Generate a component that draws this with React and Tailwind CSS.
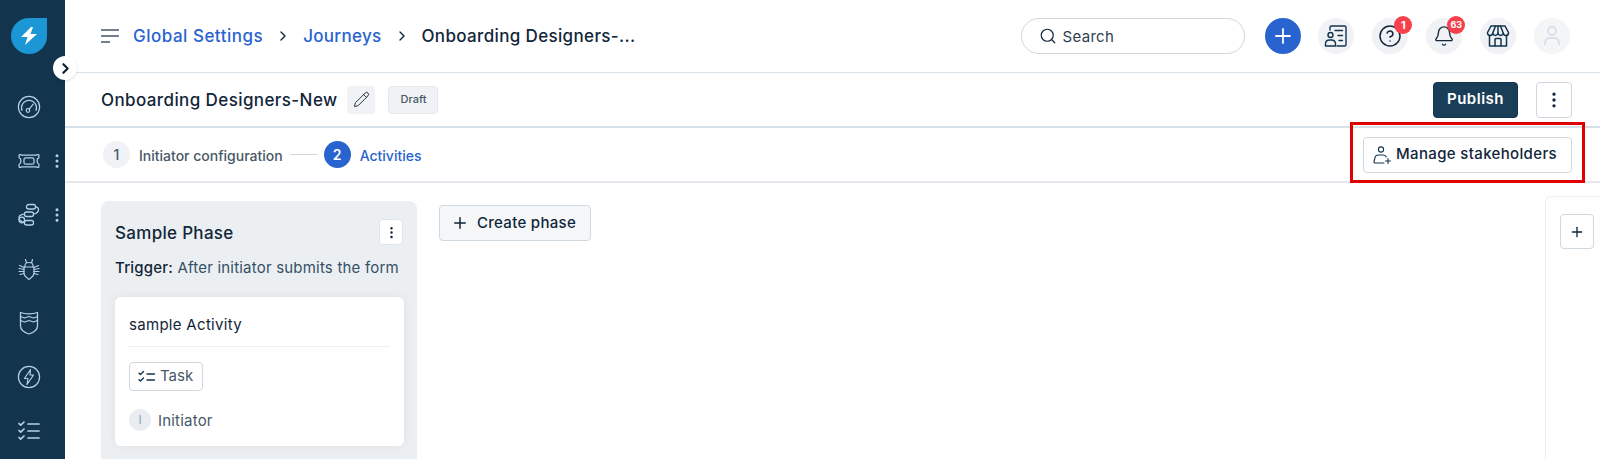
import React from 'react';
import { ChevronRight, EllipsisVertical, Plus, Search, Pencil, Bell, CircleHelp } from 'lucide-react';

function GaugeIcon() {
  return (
    <svg width="24" height="24" viewBox="0 0 24 24" fill="none" stroke="#b5cfe6" strokeWidth="1.2" strokeLinecap="round">
      <circle cx="12" cy="12" r="10.6" />
      <path d="M5 15.5a7.5 7.5 0 1 1 14 0" />
      <circle cx="11" cy="15.5" r="1.8" />
      <path d="M12.2 14.2l4-5" />
    </svg>
  );
}

function TicketIcon() {
  return (
    <svg width="22" height="24" viewBox="0 0 24 24" fill="none" stroke="#b5cfe6" strokeWidth="1.4" strokeLinejoin="round">
      <path d="M2.500 5c.8 0 1.200.6 2 .6h15c.8 0 1.200-.6 2-.6h.5c.5 0 .8.3.8.8v2.600c-1.200.5-2 2-2 3.600s.8 3.100 2 3.600v2.600c0 .5-.3.800-.8.800h-.5c-.8 0-1.200-.6-2-.6h-15c-.8 0-1.200.6-2 .6H2c-.5 0-.8-.3-.8-.8v-2.600c1.200-.5 2-2 2-3.600s-.8-3.100-2-3.600V5.800c0-.5.3-.8.8-.8z" />
      <rect x="6.500" y="8.500" width="11" height="7" rx="2" />
    </svg>
  );
}

function WorkflowIcon() {
  return (
    <svg width="24" height="24" viewBox="0 0 24 24" fill="none" stroke="#b5cfe6" strokeWidth="1.3" strokeLinejoin="round">
      <rect x="9.500" y="1.500" width="9" height="4.500" rx="2" />
      <rect x="7.500" y="9" width="9" height="4.500" rx="2" />
      <rect x="7.500" y="17.500" width="9" height="4.500" rx="2" />
      <path d="M18.500 3.800c2 0 3 1.200 3 2.900s-1 3.500-5 4.500" />
      <path d="M7.500 11.200c-3 .2-5.500 1.500-5.500 3.600 0 2.400 2.500 4.200 5.500 4.900" />
      <circle cx="4.800" cy="17" r="2.800" />
    </svg>
  );
}

function BugIcon() {
  return (
    <svg width="24" height="24" viewBox="0 0 24 24" fill="none" stroke="#b5cfe6" strokeWidth="1.2" strokeLinecap="round" strokeLinejoin="round">
      <path d="M7 10h10v6.500c0 2-3 4.500-5 6-2-1.500-5-4-5-6z" />
      <path d="M8 10V8.500C8 6.500 10 5.500 12 5.500s4 1 4 3V10M8.500 2.500L9.500 6M15.500 2.500L14.500 6" />
      <path d="M7 10.500L2.500 8.500M7 12.500L2 11.500M7 14.500H2M7 16.500L3 17.500M17 10.500l4.500-2M17 12.500l5-1M17 14.500h5M17 16.500l4 1" />
    </svg>
  );
}

function ShieldIcon() {
  return (
    <svg width="24" height="24" viewBox="0 0 24 24" fill="none" stroke="#b5cfe6" strokeWidth="1.3" strokeLinejoin="round" strokeLinecap="round">
      <path d="M3.500 1.500c2.500.9 5 1.300 8.500 1.300s6-.4 8.500-1.300v4L16.500 7 12 5.500 7.500 7l-4-1.500z" />
      <path d="M3.500 5.500v4l4 1.500 4.500-1.500 4.500 1.500 4-1.500v-4" />
      <path d="M3.500 9.500v5.500c0 3.500 4 6.500 8.500 8 4.500-1.500 8.500-4.500 8.500-8V9.500" />
    </svg>
  );
}

function BoltCircleIcon() {
  return (
    <svg width="24" height="24" viewBox="0 0 24 24" fill="none" stroke="#b5cfe6" strokeWidth="1.2" strokeLinejoin="round">
      <circle cx="12" cy="12" r="10.600" />
      <path d="M13.500 4.500L7.500 13.500h3.500l-1 6 6.500-9.500h-3.500z" />
    </svg>
  );
}

function ChecklistIcon() {
  return (
    <svg width="24" height="24" viewBox="0 0 24 24" fill="none" stroke="#b5cfe6" strokeWidth="1.7" strokeLinecap="round" strokeLinejoin="round">
      <path d="M2 4.500l1.700 1.700L7 3M2 11.500l1.700 1.700L7 10M2 18.500l1.700 1.700L7 17" />
      <path d="M11 5h11M11 12h11M11 19h11" />
    </svg>
  );
}

function TaskIcon() {
  return (
    <svg width="18" height="14" viewBox="0 0 18 14" fill="none" stroke="#12344d" strokeWidth="1.4" strokeLinecap="round" strokeLinejoin="round">
      <path d="M1 3.200l1.500 1.300L5.500 1.500M1 9.700l1.500 1.300 3-3" />
      <path d="M9 4h7.500M9 10h7.500" />
    </svg>
  );
}

function ContactsIcon() {
  return (
    <svg width="24" height="24" viewBox="0 0 24 24" fill="none" stroke="#12344d" strokeWidth="1.4" strokeLinecap="round" strokeLinejoin="round">
      <path d="M6 6V3.500A1.500 1.500 0 0 1 7.500 2h13A1.500 1.500 0 0 1 22 3.500v17a1.500 1.500 0 0 1-1.500 1.500H13" />
      <circle cx="6.500" cy="11" r="2.500" />
      <path d="M1.500 22v-2.500a4 4 0 0 1 4-3.500h2a4 4 0 0 1 4 3.500V22z" />
      <path d="M11 6.500h7.500M14 11.500h4.500M15 16.500h3.500" />
    </svg>
  );
}

function StoreIcon() {
  return (
    <svg width="24" height="24" viewBox="0 0 24 24" fill="none" stroke="#12344d" strokeWidth="1.5" strokeLinecap="round" strokeLinejoin="round">
      <path d="M5 2h14l3.500 6.500a2.600 2.600 0 0 1-5.200.7 2.700 2.700 0 0 1-5.300 0 2.700 2.700 0 0 1-5.300 0 2.600 2.600 0 0 1-5.200-.7z" />
      <path d="M9.500 2L6.700 9.200M14.500 2l2.800 7.200M12 2v7.200" />
      <path d="M3.500 11.500V22h17V11.500" />
      <path d="M9 22v-6.500a1 1 0 0 1 1-1h4a1 1 0 0 1 1 1V22" />
    </svg>
  );
}

function UserPlusIcon() {
  return (
    <svg width="20" height="20" viewBox="0 0 20 20" fill="none" stroke="#12344d" strokeWidth="1.1" strokeLinecap="round" strokeLinejoin="round">
      <circle cx="9" cy="4.500" r="2.600" />
      <path d="M12 18H3a1 1 0 0 1-1-1.200l.8-3.300A4 4 0 0 1 6.500 10h5a3.500 3.500 0 0 1 2.800 2" />
      <path d="M16 13.500v5M13.500 16h5" />
    </svg>
  );
}

function SideItem({ children, dots }) {
  return (
    <div className="relative h-[54px] flex items-center justify-center w-[58px]">
      {children}
      {dots && <EllipsisVertical size={18} strokeWidth={2} className="absolute right-[-8px] text-[#b5cfe6]" />}
    </div>
  );
}

function RoundIcon({ children, badge, badgeClass }) {
  return (
    <div className="relative w-[36px] h-[36px] rounded-full bg-[#f0f2f5] flex items-center justify-center">
      {children}
      {badge && (
        <span className={`absolute top-[-2px] w-[18px] h-[18px] rounded-full bg-[#f6414c] text-white font-bold flex items-center justify-center ${badgeClass}`}>
          {badge}
        </span>
      )}
    </div>
  );
}

export default function App() {
  return (
    <div className="relative flex h-screen overflow-hidden bg-white text-[#12263a] font-['Inter',sans-serif]">
      {/* Sidebar */}
      <aside className="w-[65px] shrink-0 bg-[#12344d] flex flex-col pt-[18px]">
        <div className="pl-[11px] mb-[26px]">
          <div className="w-[36px] h-[36px] bg-[#1c97d5] rounded-full rounded-tr-[5px] flex items-center justify-center">
            <svg width="18" height="18" viewBox="0 0 18 18" fill="#fff">
              <path d="M11 0L1 10h6.500L5 18l12-11h-6.500L13 0z" />
            </svg>
          </div>
        </div>
        <SideItem><GaugeIcon /></SideItem>
        <SideItem dots><TicketIcon /></SideItem>
        <SideItem dots><WorkflowIcon /></SideItem>
        <SideItem><BugIcon /></SideItem>
        <SideItem><ShieldIcon /></SideItem>
        <SideItem><BoltCircleIcon /></SideItem>
        <SideItem><ChecklistIcon /></SideItem>
      </aside>

      {/* Sidebar toggle */}
      <div className="absolute left-[53px] top-[56px] w-[24px] h-[24px] rounded-full bg-white shadow flex items-center justify-center">
        <ChevronRight size={17} strokeWidth={3} className="text-[#0f1f2c]" />
      </div>

      <main className="flex-1 min-w-0 flex flex-col">
        {/* Top bar */}
        <header className="h-[73px] shrink-0 border-b border-[#d8e0e8] flex items-center pl-[36px] pr-[30px]">
          <svg width="18" height="14" viewBox="0 0 18 14" stroke="#475867" strokeWidth="1.4" className="mr-[14px]">
            <path d="M0 1h18M0 7h18M0 13h9" />
          </svg>
          <span className="mt-[2px] text-[17px] tracking-[0.5px] font-medium text-[#2963cf]">Global Settings</span>
          <ChevronRight size={16} strokeWidth={2} className="mx-[12px]" />
          <span className="mt-[2px] text-[17px] tracking-[0.3px] font-medium text-[#2963cf]">Journeys</span>
          <ChevronRight size={16} strokeWidth={2} className="ml-[13px] mr-[11px]" />
          <span className="mt-[2px] text-[17px] tracking-[0.35px] font-medium">Onboarding Designers-...</span>

          <div className="ml-auto w-[224px] h-[36px] rounded-full border border-[#cfd7df] flex items-center pl-[17px] mr-[20px]">
            <Search size={18} strokeWidth={1.6} />
            <span className="mt-[2px] ml-[6px] text-[15px] tracking-[0.3px] text-[#2f4050]">Search</span>
          </div>
          <div className="flex items-center gap-[17.9px]">
            <div className="w-[36px] h-[36px] rounded-full bg-[#2963cf] flex items-center justify-center">
              <Plus size={24} strokeWidth={1.8} className="text-white" />
            </div>
            <RoundIcon><ContactsIcon /></RoundIcon>
            <RoundIcon badge="1" badgeClass="left-[22px] text-[11px]"><CircleHelp size={24} strokeWidth={1.5} /></RoundIcon>
            <RoundIcon badge="63" badgeClass="left-[21px] text-[9px]"><Bell size={22} strokeWidth={1.5} /></RoundIcon>
            <RoundIcon><StoreIcon /></RoundIcon>
            <div className="w-[36px] h-[36px] rounded-full bg-[#f3f5f7] flex items-center justify-center">
              <svg width="20" height="22" viewBox="0 0 20 22" fill="none" stroke="#d3dae4" strokeWidth="1.5">
                <circle cx="10" cy="6" r="4" />
                <path d="M3 20v-2a5 5 0 0 1 5-5h4a5 5 0 0 1 5 5v2" />
              </svg>
            </div>
          </div>
        </header>

        {/* Title row */}
        <div className="h-[55px] shrink-0 border-b-2 border-[#d8e0e8] flex items-center pl-[36px] pr-[28px]">
          <span className="mt-[2px] text-[17px] tracking-[0.4px] font-medium">Onboarding Designers-New</span>
          <div className="ml-[10px] w-[28px] h-[28px] rounded bg-[#f0f2f5] flex items-center justify-center">
            <Pencil size={17} strokeWidth={1.3} />
          </div>
          <div className="ml-[13px] w-[50px] h-[28px] rounded bg-[#f0f2f5] border border-[#e4e8ed] flex items-center justify-center text-[11px] font-medium text-[#475867]">
            Draft
          </div>
          <button className="ml-auto w-[85px] h-[36px] rounded bg-[#1b3e58] border border-[#12344d] text-white text-[15px] tracking-[0.5px] font-semibold">
            Publish
          </button>
          <div className="ml-[18px] w-[36px] h-[36px] rounded border border-[#cfd7df] flex items-center justify-center">
            <EllipsisVertical size={20} strokeWidth={2} />
          </div>
        </div>

        {/* Steps row */}
        <div className="h-[55px] shrink-0 border-b-2 border-[#e4e8ed] flex items-center pl-[38px] pr-[28px]">
          <div className="w-[27px] h-[27px] rounded-full bg-[#f0f2f5] flex items-center justify-center text-[14px] font-medium text-[#475867]">1</div>
          <span className="mt-[2px] ml-[9px] text-[14px] font-medium text-[#475867]">Initiator configuration</span>
          <div className="mx-[7px] w-[27px] h-px bg-[#cfd7df]" />
          <div className="w-[27px] h-[27px] rounded-full bg-[#2963cf] flex items-center justify-center text-[14px] font-semibold text-white">2</div>
          <span className="mt-[2px] ml-[9px] text-[14px] font-medium text-[#2963cf]">Activities</span>
          <button className="ml-auto w-[209px] h-[36px] rounded border border-[#cfd7df] flex items-center pl-[8px] text-[15px] tracking-[0.35px] font-medium">
            <UserPlusIcon />
            <span className="ml-[4px]">Manage stakeholders</span>
          </button>
        </div>

        {/* Board */}
        <div className="flex-1 min-h-0 flex pl-[36px] pt-[18px] overflow-hidden">
          <section className="w-[316px] h-[300px] shrink-0 rounded-t-lg bg-[#eceff1] px-[14px] pt-[18px]">
            <div className="h-[26px] flex items-center justify-between">
              <h2 className="mt-[4px] text-[17px] tracking-[0.3px] font-medium">Sample Phase</h2>
              <div className="w-[24px] h-[26px] rounded border border-[#dfe5ea] bg-white flex items-center justify-center">
                <EllipsisVertical size={15} strokeWidth={2} />
              </div>
            </div>
            <p className="mt-[13px] text-[15px] tracking-[0.2px] leading-[20px] whitespace-nowrap">
              <span className="font-medium">Trigger:</span> <span className="text-[#345069]">After initiator submits the form</span>
            </p>
            <div className="mt-[19px] h-[149px] w-[289px] rounded-md bg-white shadow-[0_0_8px_rgba(18,52,77,0.07)] px-[14px] pt-[18px]">
              <div className="text-[15px] tracking-[0.3px] leading-[20px]">sample Activity</div>
              <div className="mt-[11px] border-t border-[#ebeff3]" />
              <div className="mt-[15px] w-[74px] h-[29px] rounded border border-[#cfd7df] flex items-center pl-[8px] text-[15px] text-[#475867]">
                <TaskIcon />
                <span className="ml-[4px]">Task</span>
              </div>
              <div className="mt-[17px] flex items-center">
                <div className="w-[22px] h-[22px] rounded-full bg-[#e9edf2] flex items-center justify-center text-[12px] text-[#92a2b1]">I</div>
                <span className="mt-[2px] ml-[7px] text-[15px] tracking-[0.2px] text-[#475867]">Initiator</span>
              </div>
            </div>
          </section>

          <div className="ml-[22px] mt-[4px]">
            <button className="w-[152px] h-[36px] rounded border border-[#cfd7df] bg-[#f5f7f9] flex items-center pl-[11px] text-[15px] tracking-[0.3px] font-medium">
              <Plus size={18} strokeWidth={2} />
              <span className="ml-[8px]">Create phase</span>
            </button>
          </div>

          <aside className="ml-auto w-[55px] shrink-0 rounded-tl-md border-l border-t border-[#ebeff3] pl-[14px] pt-[17px] mt-[-5px]">
            <div className="w-[34px] h-[35px] rounded border border-[#cfd7df] flex items-center justify-center">
              <Plus size={16} strokeWidth={2} />
            </div>
          </aside>
        </div>
      </main>

      {/* Red annotation around the button */}
      <div className="absolute left-[1350px] top-[122px] w-[235px] h-[61px] border-[3px] border-[#e00000] pointer-events-none" />
    </div>
  );
}
